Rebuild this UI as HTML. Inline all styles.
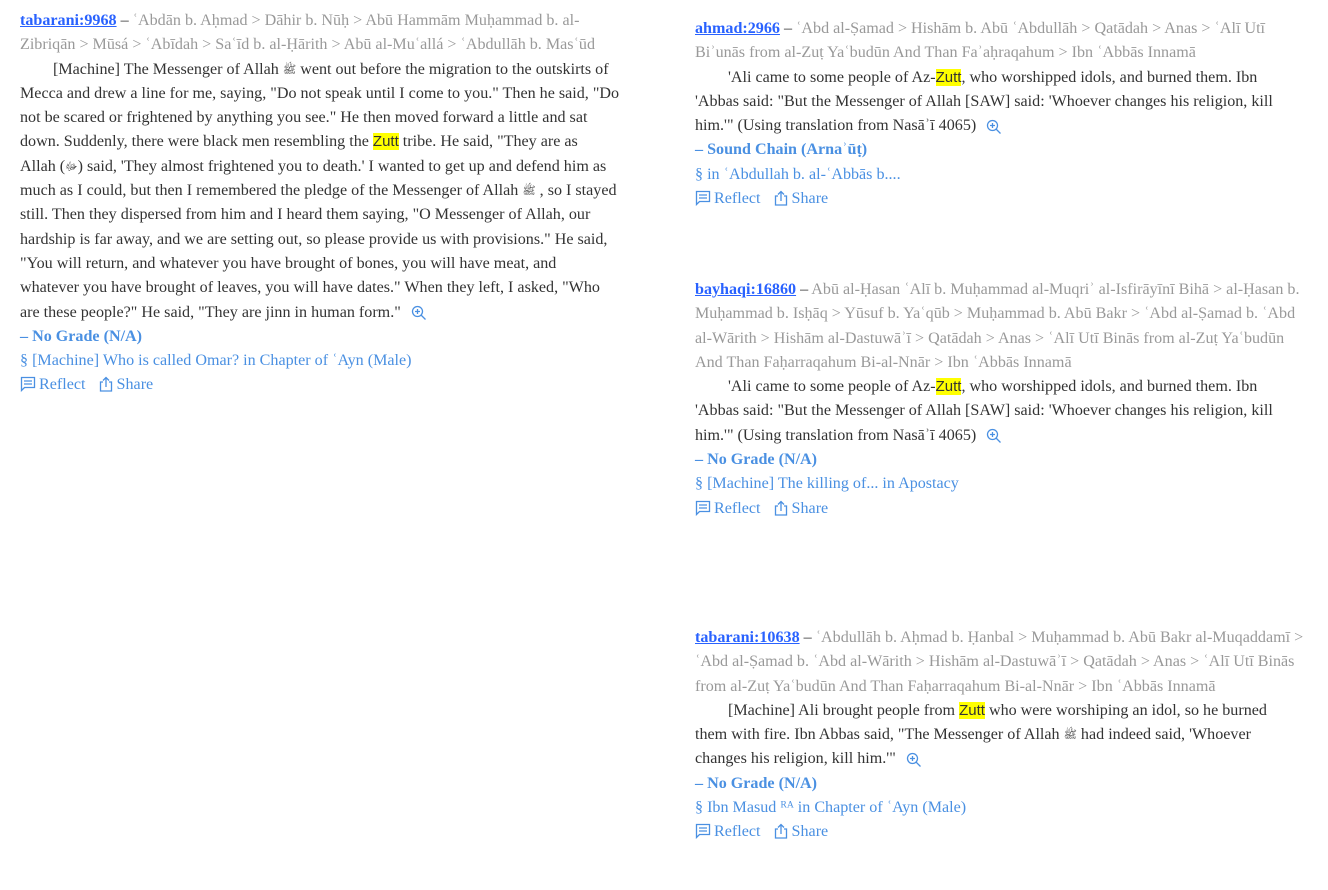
<!DOCTYPE html>
<html><head><meta charset="utf-8"><style>
body{margin:0;background:#fff;width:1328px;height:890px;overflow:hidden;font-family:"Liberation Serif",serif;font-size:16.1px;color:#333;}
.card{position:absolute;}
.l{height:24.3px;line-height:24.3px;white-space:nowrap;}
.id{color:#2962ff;font-weight:bold;text-decoration:underline;}
.ch{color:#999;}
.in{padding-left:33px;}
.g{color:#4a90e2;font-weight:bold;}
.b{color:#4a90e2;}
.z{background:#ffff00;font-family:"Liberation Sans",sans-serif;font-size:15px;}
.s{font-size:11px;font-family:"DejaVu Sans",sans-serif;vertical-align:1px;}
.mag{display:inline-block;vertical-align:middle;margin-left:6px;}
.act{color:#4a90e2;}
.act svg{vertical-align:-3px;margin-right:3px;}
</style></head><body>
<svg width="0" height="0" style="position:absolute"><defs>
<g id="mg"><circle cx="6.5" cy="6.5" r="5" fill="none" stroke="#4a90e2" stroke-width="1.3"/><path d="M10 10l4.5 4.5M4 6.5h5M6.5 4v5" stroke="#4a90e2" stroke-width="1.3"/></g>
<g id="rf"><path d="M1.5 1.5h13v10h-10l-3 3z" fill="none" stroke="#4a90e2" stroke-width="1.3"/><path d="M4 5h8M4 8h8" stroke="#4a90e2" stroke-width="1.2"/></g>
<g id="sh"><path d="M5 6H2.5v9h11V6H11" fill="none" stroke="#4a90e2" stroke-width="1.3"/><path d="M8 11V1.5M5 4.5l3-3 3 3" fill="none" stroke="#4a90e2" stroke-width="1.3"/></g>
</defs></svg>
<div class="card" style="left:20px;top:9px">
<div class="l"><span class="id">tabarani:9968</span> – <span class="ch">ʿAbdān b. Aḥmad &gt; Dāhir b. Nūḥ &gt; Abū Hammām Muḥammad b. al-</span></div>
<div class="l ch">Zibriqān &gt; Mūsá &gt; ʿAbīdah &gt; Saʿīd b. al-Ḥārith &gt; Abū al-Muʿallá &gt; ʿAbdullāh b. Masʿūd</div>
<div class="l in">[Machine] The Messenger of Allah <span class="s">ﷺ</span> went out before the migration to the outskirts of</div>
<div class="l">Mecca and drew a line for me, saying, "Do not speak until I come to you." Then he said, "Do</div>
<div class="l">not be scared or frightened by anything you see." He then moved forward a little and sat</div>
<div class="l">down. Suddenly, there were black men resembling the <span class="z">Zutt</span> tribe. He said, "They are as</div>
<div class="l">Allah (<span class="s">ﷻ</span>) said, 'They almost frightened you to death.' I wanted to get up and defend him as</div>
<div class="l">much as I could, but then I remembered the pledge of the Messenger of Allah <span class="s">ﷺ</span> , so I stayed</div>
<div class="l">still. Then they dispersed from him and I heard them saying, "O Messenger of Allah, our</div>
<div class="l">hardship is far away, and we are setting out, so please provide us with provisions." He said,</div>
<div class="l">"You will return, and whatever you have brought of bones, you will have meat, and</div>
<div class="l">whatever you have brought of leaves, you will have dates." When they left, I asked, "Who</div>
<div class="l">are these people?" He said, "They are jinn in human form." <svg class="mag" width="16" height="16"><use href="#mg"/></svg></div>
<div class="l g">– No Grade (N/A)</div>
<div class="l b">§ [Machine] Who is called Omar? in Chapter of ʿAyn (Male)</div>
<div class="l act"><svg width="16" height="16"><use href="#rf"/></svg>Reflect &nbsp; <svg width="16" height="16"><use href="#sh"/></svg>Share</div>
</div>

<div class="card" style="left:695px;top:17px">
<div class="l"><span class="id">ahmad:2966</span> – <span class="ch">ʿAbd al-Ṣamad &gt; Hishām b. Abū ʿAbdullāh &gt; Qatādah &gt; Anas &gt; ʿAlī Utī</span></div>
<div class="l ch">Biʾunās from al-Zuṭ Yaʿbudūn And Than Faʾaḥraqahum &gt; Ibn ʿAbbās Innamā</div>
<div class="l in">'Ali came to some people of Az-<span class="z">Zutt</span>, who worshipped idols, and burned them. Ibn</div>
<div class="l">'Abbas said: "But the Messenger of Allah [SAW] said: 'Whoever changes his religion, kill</div>
<div class="l">him.'" (Using translation from Nasāʾī 4065) <svg class="mag" width="16" height="16"><use href="#mg"/></svg></div>
<div class="l g">– Sound Chain (Arnaʾūṭ)</div>
<div class="l b">§ in ʿAbdullah b. al-ʿAbbās b....</div>
<div class="l act"><svg width="16" height="16"><use href="#rf"/></svg>Reflect &nbsp; <svg width="16" height="16"><use href="#sh"/></svg>Share</div>
</div>

<div class="card" style="left:695px;top:278px">
<div class="l"><span class="id">bayhaqi:16860</span> – <span class="ch">Abū al-Ḥasan ʿAlī b. Muḥammad al-Muqriʾ al-Isfirāyīnī Bihā &gt; al-Ḥasan b.</span></div>
<div class="l ch">Muḥammad b. Isḥāq &gt; Yūsuf b. Yaʿqūb &gt; Muḥammad b. Abū Bakr &gt; ʿAbd al-Ṣamad b. ʿAbd</div>
<div class="l ch">al-Wārith &gt; Hishām al-Dastuwāʾī &gt; Qatādah &gt; Anas &gt; ʿAlī Utī Binās from al-Zuṭ Yaʿbudūn</div>
<div class="l ch">And Than Faḥarraqahum Bi-al-Nnār &gt; Ibn ʿAbbās Innamā</div>
<div class="l in">'Ali came to some people of Az-<span class="z">Zutt</span>, who worshipped idols, and burned them. Ibn</div>
<div class="l">'Abbas said: "But the Messenger of Allah [SAW] said: 'Whoever changes his religion, kill</div>
<div class="l">him.'" (Using translation from Nasāʾī 4065) <svg class="mag" width="16" height="16"><use href="#mg"/></svg></div>
<div class="l g">– No Grade (N/A)</div>
<div class="l b">§ [Machine] The killing of... in Apostacy</div>
<div class="l act"><svg width="16" height="16"><use href="#rf"/></svg>Reflect &nbsp; <svg width="16" height="16"><use href="#sh"/></svg>Share</div>
</div>

<div class="card" style="left:695px;top:626px">
<div class="l"><span class="id">tabarani:10638</span> – <span class="ch">ʿAbdullāh b. Aḥmad b. Ḥanbal &gt; Muḥammad b. Abū Bakr al-Muqaddamī &gt;</span></div>
<div class="l ch">ʿAbd al-Ṣamad b. ʿAbd al-Wārith &gt; Hishām al-Dastuwāʾī &gt; Qatādah &gt; Anas &gt; ʿAlī Utī Binās</div>
<div class="l ch">from al-Zuṭ Yaʿbudūn And Than Faḥarraqahum Bi-al-Nnār &gt; Ibn ʿAbbās Innamā</div>
<div class="l in">[Machine] Ali brought people from <span class="z">Zutt</span> who were worshiping an idol, so he burned</div>
<div class="l">them with fire. Ibn Abbas said, "The Messenger of Allah <span class="s">ﷺ</span> had indeed said, 'Whoever</div>
<div class="l">changes his religion, kill him.'" <svg class="mag" width="16" height="16"><use href="#mg"/></svg></div>
<div class="l g">– No Grade (N/A)</div>
<div class="l b">§ Ibn Masud ᴿᴬ in Chapter of ʿAyn (Male)</div>
<div class="l act"><svg width="16" height="16"><use href="#rf"/></svg>Reflect &nbsp; <svg width="16" height="16"><use href="#sh"/></svg>Share</div>
</div>
</body></html>
